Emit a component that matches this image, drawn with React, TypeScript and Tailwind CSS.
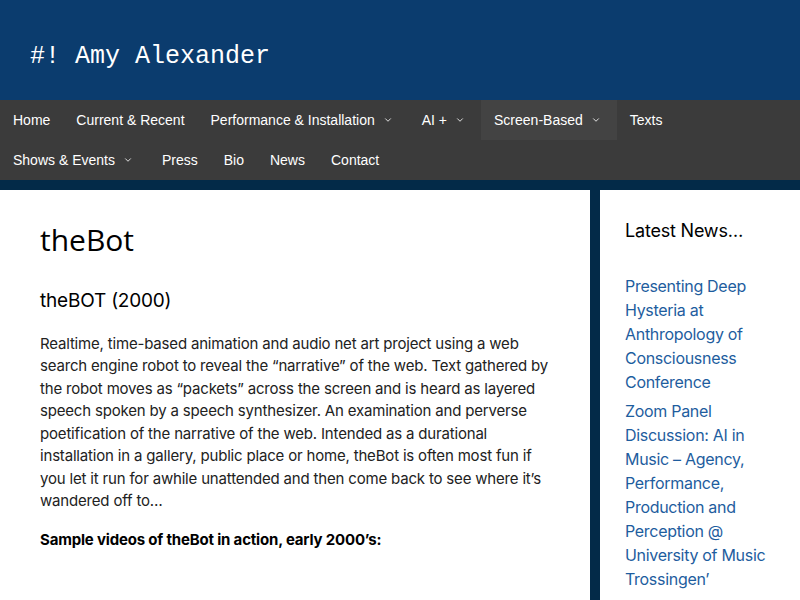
import { ChevronDown } from 'lucide-react';

const navRow1 = [
  { label: 'Home' },
  { label: 'Current & Recent' },
  { label: 'Performance & Installation', sub: true },
  { label: 'AI +', sub: true },
  { label: 'Screen-Based', sub: true, active: true },
  { label: 'Texts' },
];

const navRow2 = [
  { label: 'Shows & Events', sub: true },
  { label: 'Press' },
  { label: 'Bio' },
  { label: 'News' },
  { label: 'Contact' },
];

const news = [
  'Presenting Deep Hysteria at Anthropology of Consciousness Conference',
  'Zoom Panel Discussion: AI in Music – Agency, Performance, Production and Perception @ University of Music Trossingen’',
];

type NavItem = { label: string; sub?: boolean; active?: boolean };

function NavLink({ item }: { item: NavItem }) {
  return (
    <a
      href="#"
      className={`flex items-center h-10 pl-[13px] ${
        item.sub ? 'pr-[16px]' : 'pr-[13px]'
      } ${item.active ? 'bg-[#434343]' : ''}`}
    >
      <span>{item.label}</span>
      {item.sub && (
        <ChevronDown className="w-[10px] h-[10px] ml-[8px]" strokeWidth={2} />
      )}
    </a>
  );
}

export default function App() {
  return (
    <div className="min-h-screen flex flex-col bg-[#032a48]">
      <header className="bg-[#0b3c6e] h-[100px] flex items-center px-[30px]">
        <h1 className="text-white text-[25px] font-['Liberation_Mono',monospace] pt-[14px]">
          #! Amy Alexander
        </h1>
      </header>

      <nav className="bg-[#3b3b3b] text-white text-[14px] font-['Liberation_Sans',Arial,sans-serif]">
        <div className="flex">
          {navRow1.map((item) => (
            <NavLink key={item.label} item={item} />
          ))}
        </div>
        <div className="flex">
          {navRow2.map((item) => (
            <NavLink key={item.label} item={item} />
          ))}
        </div>
      </nav>

      <div className="flex-1 flex gap-[10px] mt-[10px] font-['Inter',sans-serif]">
        <main className="w-[590px] bg-white px-[40px] pt-[32px] pb-10 text-[#222]">
          <h1 className="text-[30px] leading-[1.2] font-['Open_Sans',sans-serif] text-black mb-[32px]">
            theBot
          </h1>
          <h2 className="text-[19px] leading-[1.2] text-black tracking-[-0.2px] mb-[20px]">
            theBOT (2000)
          </h2>
          <p className="text-[15px] leading-[22.5px] tracking-[-0.18px] mb-[16px]">
            Realtime, time-based animation and audio net art project using a web
            search engine robot to reveal the “narrative” of the web. Text
            gathered by the robot moves as “packets” across the screen and is
            heard as layered speech spoken by a speech synthesizer. An
            examination and perverse poetification of the narrative of the web.
            Intended as a durational installation in a gallery, public place or
            home, theBot is often most fun if you let it run for awhile
            unattended and then come back to see where it’s wandered off to…
          </p>
          <p className="text-[15px] leading-[22.5px] tracking-[-0.18px] font-bold text-black">
            Sample videos of theBot in action, early 2000’s:
          </p>
        </main>

        <aside className="flex-1 bg-white pl-[25px] pr-[20px] pt-[30px]">
          <h2 className="text-[18px] text-black leading-[1.2] tracking-[-0.2px] mb-[32px]">
            Latest News…
          </h2>
          <ul className="flex flex-col gap-[5px]">
            {news.map((n) => (
              <li key={n}>
                <a
                  href="#"
                  className="text-[16px] leading-[24px] tracking-[-0.3px] text-[#1e5d9e]"
                >
                  {n}
                </a>
              </li>
            ))}
          </ul>
        </aside>
      </div>
    </div>
  );
}
